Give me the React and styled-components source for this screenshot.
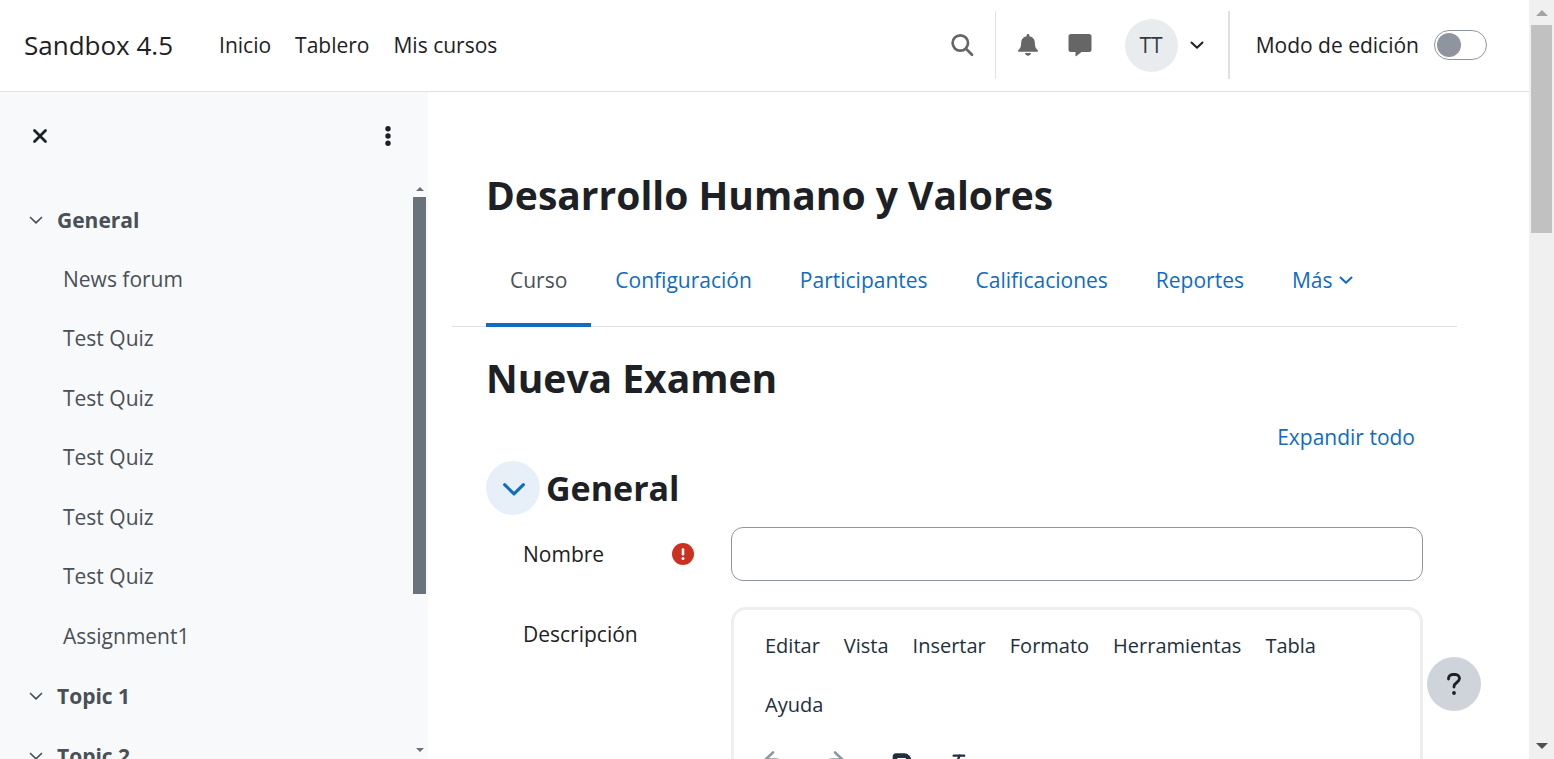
import React, { useState } from "react";
import styled, { createGlobalStyle } from "styled-components";
import { Bold, Italic } from "lucide-react";

const GlobalStyle = createGlobalStyle`
  *, *::before, *::after { box-sizing: border-box; }
  body {
    margin: 0;
    background: #fff;
    color: #1d2125;
    font-family: "Open Sans", "Noto Sans", sans-serif;
    font-size: 21px;
    line-height: 34px;
  }
  button, input { font: inherit; color: inherit; }
  button { padding: 0; border: 0; background: none; cursor: pointer; }
  a { color: #0f6cbf; text-decoration: none; }
  ul { list-style: none; margin: 0; padding: 0; }
  svg { display: block; flex: none; }
`;

const Shell = styled.div`
  display: flex;
  height: 100vh;
  overflow: hidden;
`;

const Page = styled.div`
  flex: 1;
  min-width: 0;
  display: flex;
  flex-direction: column;
`;

const Navbar = styled.header`
  flex: none;
  display: flex;
  align-items: center;
  height: 92px;
  padding: 0 42px 1px 24px;
  border-bottom: 1px solid #dee2e6;
`;

const Brand = styled.a`
  color: #1d2125;
  font-size: 26px;
  margin-right: 46px;
`;

const MainNav = styled.nav`
  display: flex;
  gap: 24px;
  flex: 1;
  a { color: #1d2125; }
`;

const NavTools = styled.div`
  display: flex;
  align-items: center;
  color: #666;
`;

const IconButton = styled.button`
  display: grid;
  place-items: center;
  width: ${(p) => p.$width || 52}px;
  height: 52px;
`;

const Divider = styled.span`
  width: ${(p) => p.$width || 1}px;
  height: 68px;
  margin-left: ${(p) => p.$before}px;
  margin-right: ${(p) => p.$after}px;
  background: #dee2e6;
`;

const UserMenu = styled.button`
  display: flex;
  align-items: center;
  gap: 12px;
  margin-left: 19px;
  color: #1d2125;
`;

const Avatar = styled.span`
  display: grid;
  place-items: center;
  width: 53px;
  height: 53px;
  border-radius: 50%;
  background: #e9ecef;
  color: #343a40;
`;

const EditMode = styled.label`
  display: flex;
  align-items: center;
  gap: 15px;
  color: #1d2125;
`;

const Switch = styled.input`
  appearance: none;
  display: flex;
  align-items: center;
  width: 53px;
  height: 30px;
  margin: 0;
  padding: 0 2px;
  border: 1px solid #8f959e;
  border-radius: 15px;
  background: #fff;
  &::before {
    content: "";
    width: 24px;
    height: 24px;
    border-radius: 50%;
    background: #8f959e;
  }
  &:checked { justify-content: flex-end; }
`;

const Body = styled.div`
  flex: 1;
  min-height: 0;
  display: flex;
`;

const Drawer = styled.aside`
  flex: none;
  width: 428px;
  display: flex;
  flex-direction: column;
  background: #f8f9fa;
  color: #495057;
`;

const DrawerHeader = styled.div`
  flex: none;
  display: flex;
  align-items: center;
  justify-content: space-between;
  height: 90px;
  padding: 0 26px 3px 26px;
  color: #1d2125;
`;

const DrawerButton = styled(IconButton)`
  width: 28px;
  height: 40px;
`;

const DrawerBody = styled.div`
  flex: 1;
  min-height: 0;
  display: flex;
`;

const CourseIndex = styled.nav`
  flex: 1;
  min-width: 0;
  overflow: hidden;
  padding: 8px 0 0 29px;
`;

const SectionToggle = styled.button`
  display: flex;
  align-items: center;
  gap: 14px;
  height: 60px;
  font-weight: 700;
`;

const ActivityList = styled.ul`
  display: flex;
  flex-direction: column;
  height: ${(p) => p.$height}px;
  li { flex: 1; min-height: 0; }
`;

const ActivityLink = styled.a`
  display: block;
  line-height: 58px;
  padding-left: 34px;
  color: #495057;
`;

const ScrollBar = styled.div`
  flex: none;
  display: flex;
  flex-direction: column;
  align-items: center;
  width: ${(p) => (p.$page ? 25 : 15)}px;
  padding: ${(p) => (p.$page ? "10px 0" : "5px 2px 7px 0")};
  background: ${(p) => (p.$page ? "#f0f0f0" : "transparent")};
`;

const ScrollTrack = styled.div`
  flex: 1;
  width: 100%;
  padding: ${(p) => (p.$page ? "9px 2px 0" : "6px 0 0")};
`;

const ScrollThumb = styled.div`
  height: ${(p) => p.$share}%;
  background: ${(p) => p.$color};
`;

const Main = styled.main`
  flex: 1;
  min-width: 0;
  overflow: hidden;
  padding: 76px 72px 0 24px;
`;

const Title = styled.h1`
  margin: 0;
  padding-left: 34px;
  font-size: 39px;
  line-height: 54px;
  font-weight: 700;
`;

const Tabs = styled.nav`
  display: flex;
  height: 93px;
  margin: 12px 0 24px;
  padding-left: 34px;
  border-bottom: 1px solid #dee2e6;
`;

const Tab = styled.a`
  display: flex;
  align-items: center;
  gap: 6px;
  margin-bottom: -1px;
  padding: 3px 24px 0;
  border-bottom: 4px solid ${(p) => (p.$active ? "#0f6cbf" : "transparent")};
  color: ${(p) => (p.$active ? "#495057" : "#0f6cbf")};
`;

const Form = styled.form`
  padding: 0 34px;
`;

const FormTitle = styled(Title).attrs({ as: "h2" })`
  padding-left: 0;
`;

const ExpandRow = styled.div`
  display: flex;
  justify-content: flex-end;
  padding: 15px 8px 7px;
`;

const SectionHead = styled.div`
  display: flex;
  align-items: center;
  gap: 6px;
  height: 54px;
  h3 { margin: 0; font-size: 34px; line-height: 44px; }
`;

const CollapseButton = styled.button`
  display: grid;
  place-items: center;
  width: 54px;
  height: 54px;
  padding: 2px 0 0 2px;
  border-radius: 50%;
  background: #e7f0f9;
  color: #0f6cbf;
`;

const Field = styled.div`
  display: grid;
  grid-template-columns: 171px minmax(0, 1fr);
  column-gap: 37px;
  margin: 12px 0 26px 37px;
`;

const FieldLabel = styled.div`
  display: flex;
  align-items: center;
  justify-content: space-between;
  height: 54px;
`;

const TextInput = styled.input`
  width: 100%;
  height: 54px;
  padding: 0 16px;
  border: 1px solid #8f959e;
  border-radius: 12px;
  background: #fff;
`;

const Editor = styled.div`
  height: 400px;
  border: 3px solid #eee;
  border-radius: 15px;
  color: #222f3e;
`;

const EditorMenu = styled.div`
  display: flex;
  flex-wrap: wrap;
  column-gap: 24px;
  padding: 6px 31px 0;
  font-size: 20px;
  button { height: 59px; }
`;

const EditorTools = styled.div`
  display: flex;
  gap: 14px;
  padding: 4px 13px;
`;

const ToolGroup = styled.div`
  display: flex;
  gap: ${(p) => p.$gap}px;
`;

const ToolButton = styled.button`
  display: grid;
  place-items: center;
  width: 54px;
  height: 54px;
  color: ${(p) => (p.$muted ? "#90979f" : "#222f3e")};
`;

const HelpButton = styled.button`
  position: fixed;
  right: 73px;
  bottom: 48px;
  display: grid;
  place-items: center;
  width: 54px;
  height: 54px;
  border-radius: 50%;
  background: #ced4da;
`;

const Chevron = ({ size = 14, stroke = 2 }) => (
  <svg width={size} height={size} viewBox="0 0 14 14" fill="none" stroke="currentColor" strokeWidth={stroke} strokeLinecap="round" strokeLinejoin="round" aria-hidden="true">
    <path d="M1.500 4.500 7 9.800l5.500-5.300" />
  </svg>
);

const Arrow = ({ down, width = 8, fill = "#6a737b" }) => (
  <svg width={width} height={width / 2} viewBox="0 0 8 4" fill={fill} aria-hidden="true">
    <path d={down ? "M0 0h8L4 4z" : "M0 4h8L4 0z"} />
  </svg>
);

const sections = [
  { name: "General", height: 416, items: ["News forum", "Test Quiz", "Test Quiz", "Test Quiz", "Test Quiz", "Test Quiz", "Assignment1"] },
  { name: "Topic 1", height: 0, items: [] },
  { name: "Topic 2", height: 0, items: [] },
];

const tabs = ["Curso", "Configuración", "Participantes", "Calificaciones", "Reportes"];
const editorMenus = ["Editar", "Vista", "Insertar", "Formato", "Herramientas", "Tabla", "Ayuda"];

export default function App() {
  const [editing, setEditing] = useState(false);
  return (
    <>
      <GlobalStyle />
      <Shell>
        <Page>
          <Navbar>
            <Brand href="#">Sandbox 4.5</Brand>
            <MainNav>
              <a href="#">Inicio</a>
              <a href="#">Tablero</a>
              <a href="#">Mis cursos</a>
            </MainNav>
            <NavTools>
              <IconButton $width={24} aria-label="Buscar">
                <svg width="24" height="24" viewBox="0 0 24 24" fill="none" stroke="currentColor" strokeWidth="2.700">
                  <circle cx="10.300" cy="10" r="7.700" />
                  <path d="m16 15.700 6 6" strokeLinecap="round" />
                </svg>
              </IconButton>
              <Divider $before={21} $after={6} />
              <IconButton aria-label="Notificaciones">
                <svg width="22" height="24" viewBox="0 0 22 24" fill="currentColor">
                  <path d="M11 1c.9 0 1.400.6 1.400 1.400v.8c3.500.6 5.400 3.200 5.400 6.300 0 4 .8 5.800 2.900 7.700.7.8.3 1.600-.8 1.600H2.100c-1.100 0-1.500-.8-.8-1.600 2.100-1.900 2.900-3.700 2.900-7.700 0-3.100 1.900-5.700 5.400-6.300v-.8C9.600 1.600 10.100 1 11 1zM8 20h6c-.2 1.600-1.600 2.800-3 2.800S8.200 21.600 8 20z" />
                </svg>
              </IconButton>
              <IconButton aria-label="Mensajes">
                <svg width="24" height="24" viewBox="0 0 24 24" fill="currentColor">
                  <path d="M3 1h18a2.500 2.500 0 0 1 2.500 2.500v13A2.500 2.500 0 0 1 21 19h-7.500l-5 4c-.5.400-1 .1-1-.5V19H3a2.500 2.500 0 0 1-2.500-2.500v-13A2.500 2.500 0 0 1 3 1z" />
                </svg>
              </IconButton>
              <UserMenu aria-label="Menú de usuario">
                <Avatar>TT</Avatar>
                <Chevron />
              </UserMenu>
              <Divider $width={2} $before={24} $after={26} />
              <EditMode>
                Modo de edición
                <Switch type="checkbox" role="switch" checked={editing} onChange={(e) => setEditing(e.target.checked)} />
              </EditMode>
            </NavTools>
          </Navbar>

          <Body>
            <Drawer>
              <DrawerHeader>
                <DrawerButton aria-label="Cerrar índice del curso">
                  <svg width="16" height="16" viewBox="0 0 16 16" fill="none" stroke="currentColor" strokeWidth="2.800" strokeLinecap="round">
                    <path d="m2.500 2.500 11 11m0-11-11 11" />
                  </svg>
                </DrawerButton>
                <DrawerButton aria-label="Opciones del índice">
                  <svg width="6" height="20" viewBox="0 0 6 20" fill="currentColor">
                    <circle cx="3" cy="2.700" r="2.700" />
                    <circle cx="3" cy="10" r="2.700" />
                    <circle cx="3" cy="17.300" r="2.700" />
                  </svg>
                </DrawerButton>
              </DrawerHeader>
              <DrawerBody>
                <CourseIndex>
                  {sections.map((section) => (
                    <div key={section.name}>
                      <SectionToggle>
                        <Chevron stroke={1.700} />
                        {section.name}
                      </SectionToggle>
                      <ActivityList $height={section.height}>
                        {section.items.map((item, i) => (
                          <li key={i}><ActivityLink href="#">{item}</ActivityLink></li>
                        ))}
                      </ActivityList>
                    </div>
                  ))}
                </CourseIndex>
                <ScrollBar>
                  <Arrow />
                  <ScrollTrack>
                    <ScrollThumb $share={72} $color="#6a737b" />
                  </ScrollTrack>
                  <Arrow down />
                </ScrollBar>
              </DrawerBody>
            </Drawer>

            <Main>
              <Title>Desarrollo Humano y Valores</Title>
              <Tabs>
                {tabs.map((tab, i) => (
                  <Tab href="#" key={tab} $active={i === 0}>{tab}</Tab>
                ))}
                <Tab href="#">Más <Chevron /></Tab>
              </Tabs>
              <Form>
                <FormTitle>Nueva Examen</FormTitle>
                <ExpandRow><a href="#">Expandir todo</a></ExpandRow>
                <SectionHead>
                  <CollapseButton type="button" aria-label="Contraer General">
                    <Chevron size={24} stroke={1.800} />
                  </CollapseButton>
                  <h3>General</h3>
                </SectionHead>
                <Field>
                  <FieldLabel>
                    <label htmlFor="name">Nombre</label>
                    <svg width="22" height="22" viewBox="0 0 22 22" role="img" aria-label="Obligatorio">
                      <circle cx="11" cy="11" r="11" fill="#ca3120" />
                      <path d="M11 6.500v4.800" stroke="#fff" strokeWidth="2.600" strokeLinecap="round" />
                      <circle cx="11" cy="15.500" r="1.500" fill="#fff" />
                    </svg>
                  </FieldLabel>
                  <TextInput id="name" type="text" />
                </Field>
                <Field>
                  <FieldLabel>Descripción</FieldLabel>
                  <Editor>
                    <EditorMenu>
                      {editorMenus.map((menu) => <button type="button" key={menu}>{menu}</button>)}
                    </EditorMenu>
                    <EditorTools>
                      <ToolGroup $gap={6}>
                        <ToolButton type="button" $muted aria-label="Deshacer">
                          <svg width="20" height="28" viewBox="0 0 20 28" fill="none" stroke="currentColor" strokeWidth="2.600" strokeLinecap="round">
                            <path d="M9 1.500 1.500 8.500 9 15.500M2 8.500h10a6 6 0 0 1 6 6v4" />
                          </svg>
                        </ToolButton>
                        <ToolButton type="button" $muted aria-label="Rehacer">
                          <svg width="20" height="28" viewBox="0 0 20 28" fill="none" stroke="currentColor" strokeWidth="2.600" strokeLinecap="round">
                            <path d="m11 1.500 7.500 7-7.500 7M18 8.500H8a6 6 0 0 0-6 6v4" />
                          </svg>
                        </ToolButton>
                      </ToolGroup>
                      <ToolGroup $gap={0}>
                        <ToolButton type="button" aria-label="Negrita">
                          <Bold size={28} strokeWidth={4} />
                        </ToolButton>
                        <ToolButton type="button" aria-label="Cursiva">
                          <Italic size={28} strokeWidth={2} />
                        </ToolButton>
                      </ToolGroup>
                    </EditorTools>
                  </Editor>
                </Field>
              </Form>
            </Main>
          </Body>
        </Page>

        <ScrollBar $page>
          <Arrow width={12} fill="#a3a3a3" />
          <ScrollTrack $page>
            <ScrollThumb $share={29} $color="#c1c1c1" />
          </ScrollTrack>
          <Arrow down width={12} fill="#505050" />
        </ScrollBar>
      </Shell>
      <HelpButton aria-label="Ayuda de la página">
        <svg width="16" height="24" viewBox="0 0 16 24" fill="none" stroke="currentColor" strokeWidth="2.800" strokeLinecap="round">
          <path d="M2.500 7V6.500a4 4 0 0 1 4-4h3a4 4 0 0 1 4 4c0 4-5.500 4-5.500 8v.5" />
          <circle cx="8" cy="21" r="1.900" fill="currentColor" stroke="none" />
        </svg>
      </HelpButton>
    </>
  );
}
